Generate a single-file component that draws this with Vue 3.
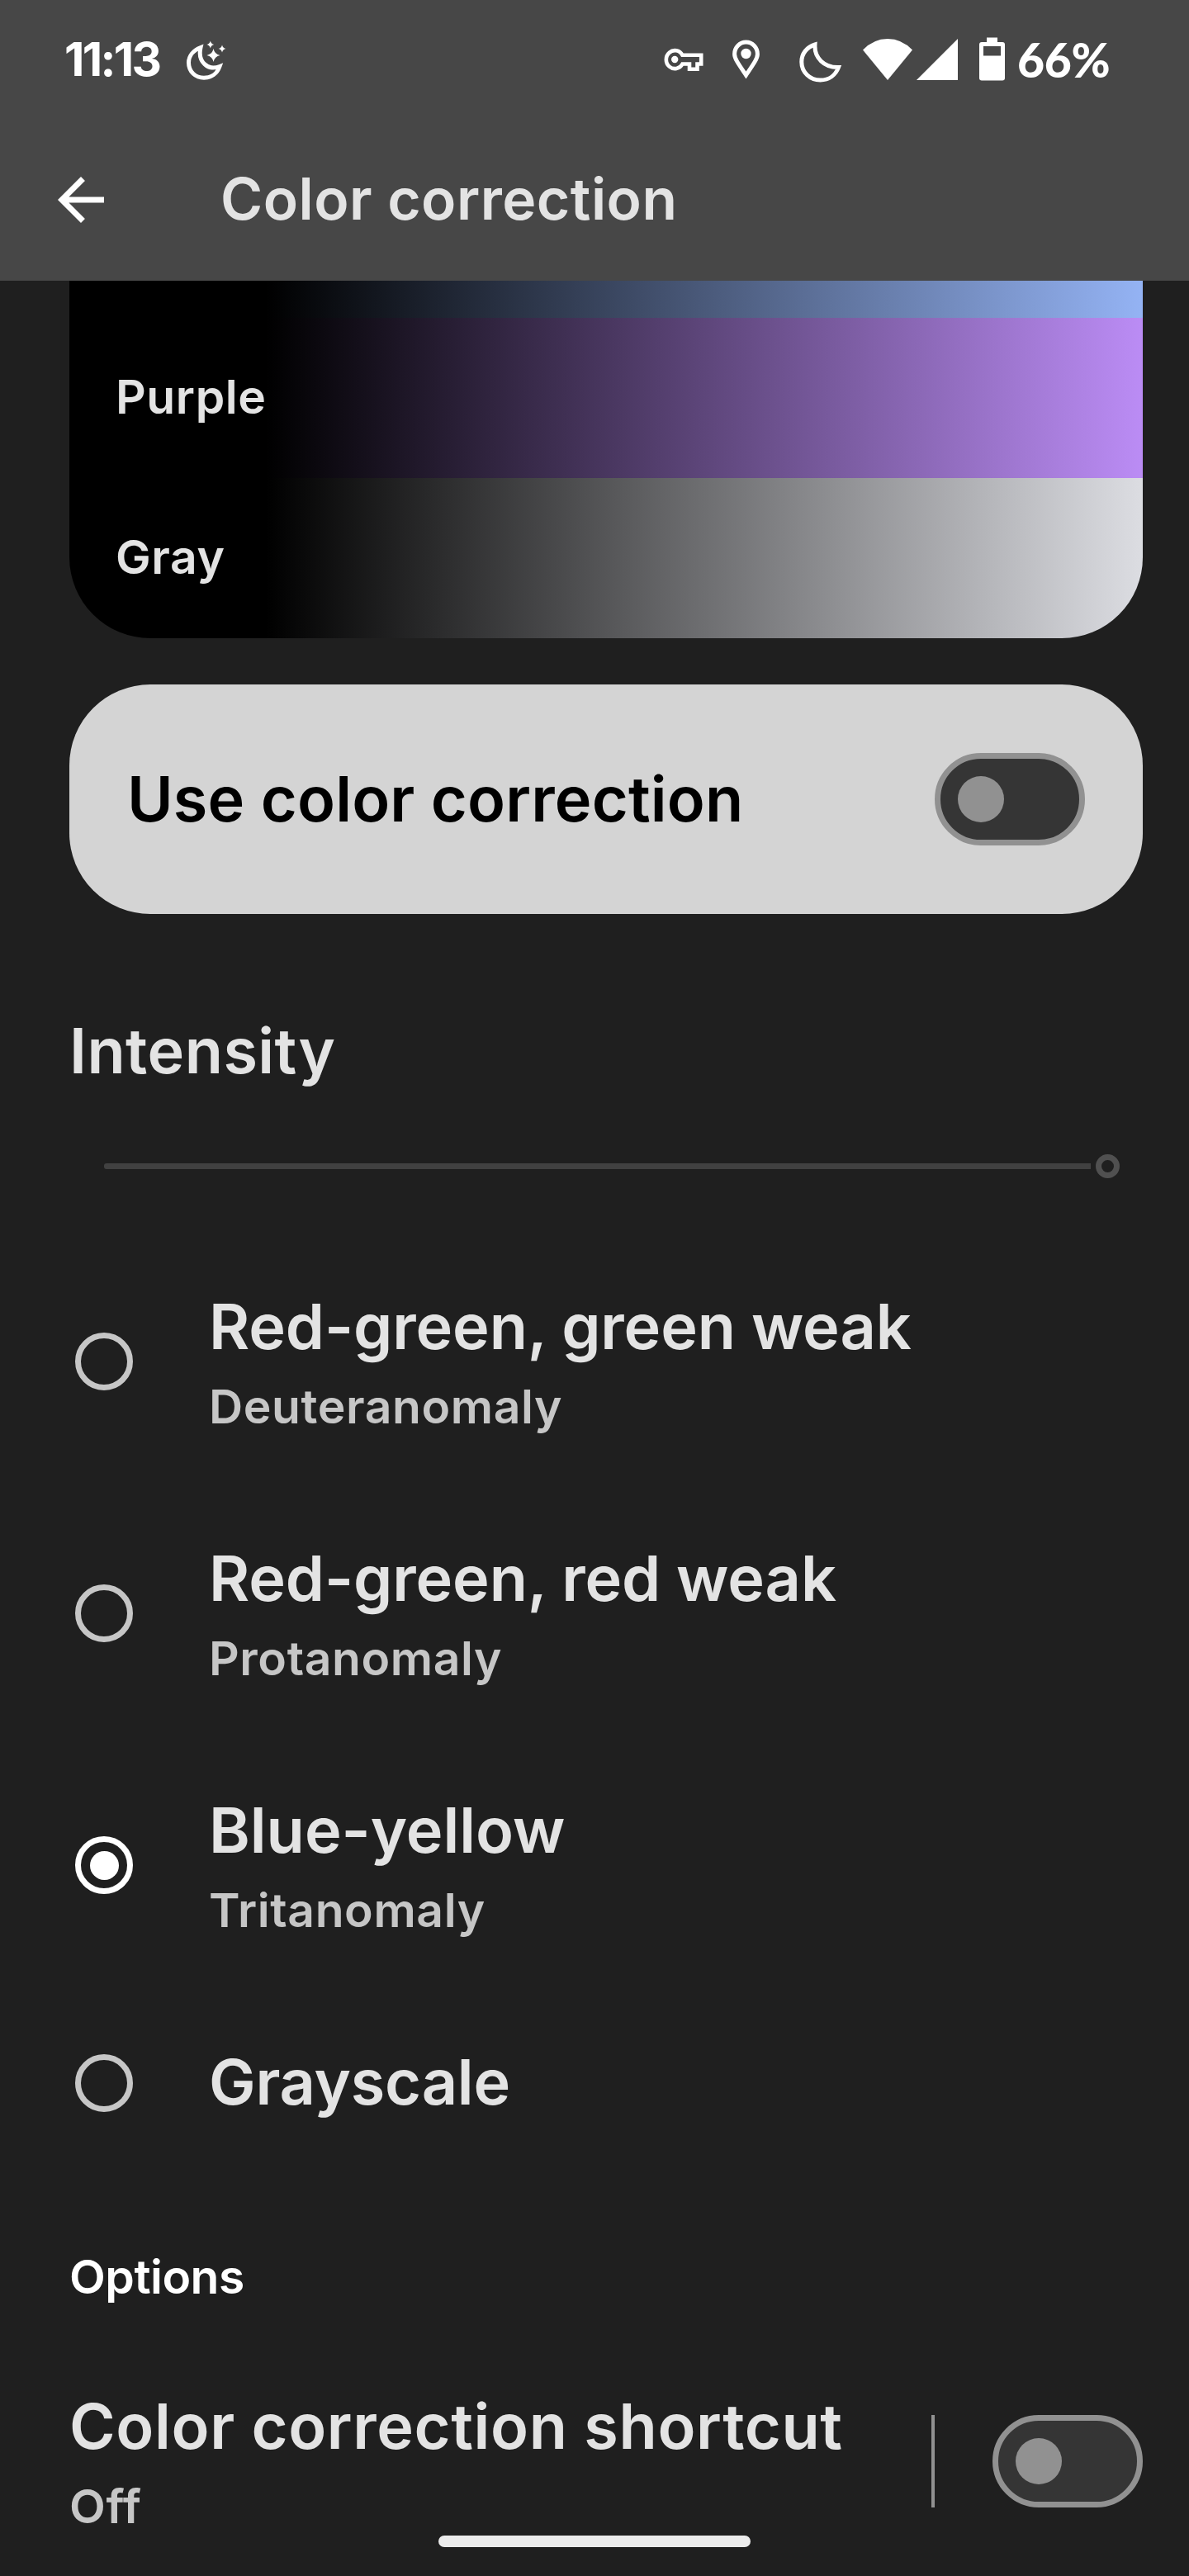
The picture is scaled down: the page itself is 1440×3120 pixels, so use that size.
<script setup>
import { ref } from 'vue'

const selected = ref('tritanomaly')

const modes = [
  { id: 'deuteranomaly', title: 'Red-green, green weak', sub: 'Deuteranomaly' },
  { id: 'protanomaly', title: 'Red-green, red weak', sub: 'Protanomaly' },
  { id: 'tritanomaly', title: 'Blue-yellow', sub: 'Tritanomaly' },
  { id: 'grayscale', title: 'Grayscale', sub: '' },
]
</script>

<template>
  <div class="screen">
    <header class="top">
      <div class="status">
        <span class="time">11:13</span>
        <svg class="i-bed" viewBox="222 44 56 56" width="56" height="56">
          <path d="M243 57.5C234 61 228.5 68 228.5 76C228.5 87 237 94.3 247 94.3C256 94.3 263 89 266 80.5C252 86 239 75 243 57.5Z" fill="none" stroke="#fff" stroke-width="5" />
          <path d="M258.5 59Q259.900 65.600 266.500 67Q259.900 68.400 258.500 75Q257.100 68.400 250.500 67Q257.100 65.600 258.500 59ZM254.800 49.500Q255.700 53.100 259.300 54Q255.700 54.900 254.800 58.500Q253.900 54.900 250.300 54Q253.900 53.100 254.800 49.500ZM269 54.500Q269.900 58.100 273.500 59Q269.900 59.900 269 63.500Q268.100 59.900 264.500 59Q268.100 58.100 269 54.500Z" fill="#fff" />
        </svg>
        <svg class="i-sys" viewBox="800 40 424 64" width="424" height="64">
          <g fill="none" stroke="#fff">
            <path d="M826.500 66.800H849.200V77.500H844.500V83.800H835V77.500H826.500A10.500 11 0 1 1 826.500 66.800Z" stroke-width="4.600" />
            <path d="M903.500 91C894 77 889.600 71 889.600 65.500A13.900 14.500 0 0 1 917.400 65.500C917.400 71 913 77 903.500 91Z" stroke-width="5" />
            <path d="M987 54C977 57 970.800 65 970.800 75C970.800 87.500 981 97 993.500 97C1004 97 1012 91 1015.500 81.500C998 82 986 70 987 54Z" stroke-width="5" />
          </g>
          <g fill="#fff">
            <circle cx="817.200" cy="72" r="4.200" />
            <circle cx="903.500" cy="65" r="6.200" />
            <path d="M1075 97L1045 60.500Q1058 47 1075 47T1105 60.500Z" />
            <path d="M1110 97H1160V47Z" />
            <path fill-rule="evenodd" d="M1195 45.500H1208V51H1214Q1217 51 1217 54V94.500Q1217 97.500 1214 97.500H1189Q1186 97.500 1186 94.500V54Q1186 51 1189 51H1195ZM1191 56V67.500H1212V56Z" />
          </g>
        </svg>
        <span class="pct">66%</span>
      </div>
      <div class="bar">
        <svg class="back" viewBox="0 0 24 24" width="84" height="84">
          <path fill="#fff" d="M20 11H7.830l5.590-5.590L12 4l-8 8 8 8 1.410-1.410L7.830 13H20v-2z" />
        </svg>
        <h1 class="heading">Color correction</h1>
      </div>
    </header>

    <main class="body">
      <section class="preview">
        <div class="swatch blue"></div>
        <div class="swatch purple"><span>Purple</span></div>
        <div class="swatch gray"><span>Gray</span></div>
      </section>

      <section class="card">
        <span class="card-label">Use color correction</span>
        <span class="switch"><i></i></span>
      </section>

      <h2 class="title intensity">Intensity</h2>
      <div class="slider"><span class="track"></span><span class="thumb"></span></div>

      <ul class="modes">
        <li v-for="m in modes" :key="m.id" class="mode" :class="[m.id, { single: !m.sub }]" @click="selected = m.id">
          <span class="radio" :class="{ on: selected === m.id }"></span>
          <div class="mode-text">
            <div class="title">{{ m.title }}</div>
            <div v-if="m.sub" class="sub">{{ m.sub }}</div>
          </div>
        </li>
      </ul>

      <h3 class="options">Options</h3>
      <section class="shortcut">
        <div class="shortcut-text">
          <div class="title">Color correction shortcut</div>
          <div class="sub">Off</div>
        </div>
        <span class="divider"></span>
        <span class="switch"><i></i></span>
      </section>
    </main>
    <div class="pill"></div>
  </div>
</template>

<style>
body {
  background: #1f1f1f;
}
</style>

<style scoped>
.screen {
  position: relative;
  width: 1440px;
  height: 3120px;
  overflow: hidden;
  background: #1f1f1f;
  color: #e3e3e3;
  font-family: Inter, "Open Sans", sans-serif;
  font-weight: 600;
}
h1, h2, h3, ul {
  margin: 0;
  padding: 0;
  font-weight: inherit;
}
.top {
  height: 340px;
  background: #474747;
}
.status {
  display: flex;
  align-items: center;
  height: 144px;
  padding-left: 78px;
  color: #fff;
  white-space: nowrap;
}
.time {
  width: 144px;
  font-size: 56.5px;
  line-height: 70px;
  font-weight: 700;
  letter-spacing: -2.6px;
}
.i-sys {
  margin-left: 522px;
}
.pct {
  margin-left: 8px;
  font: 900 57px/70px Lato, sans-serif;
  letter-spacing: -0.3px;
}
.bar {
  display: flex;
  align-items: center;
  height: 196px;
  padding-left: 56px;
}
.heading {
  margin-left: 127px;
  padding-bottom: 3px;
  font-size: 69.5px;
  line-height: 90px;
  letter-spacing: 0.5px;
}
.body {
  padding: 0 56px 0 84px;
}
.preview {
  height: 433px;
  border-radius: 0 0 98px 98px;
  overflow: hidden;
}
.swatch {
  display: flex;
  align-items: center;
  box-sizing: border-box;
  height: 194px;
  padding: 0 0 3px 56px;
  font-size: 57px;
  letter-spacing: 0.6px;
}
.blue {
  height: 45px;
  background: linear-gradient(90deg, #000 238px, #94b3f4);
}
.purple {
  background: linear-gradient(90deg, #000 238px, #bb8cf5);
}
.gray {
  background: linear-gradient(90deg, #000 238px, #dcdde2);
}
.card {
  display: flex;
  align-items: center;
  justify-content: space-between;
  height: 278px;
  margin-top: 56px;
  padding: 0 70px;
  border-radius: 98px;
  background: #d4d4d4;
  color: #000;
}
.card-label {
  padding-bottom: 2px;
  font-size: 75.6px;
  letter-spacing: 0.2px;
}
.switch {
  display: flex;
  align-items: center;
  box-sizing: border-box;
  flex: none;
  width: 182px;
  height: 112px;
  padding-left: 21px;
  border: 7px solid #919191;
  border-radius: 56px;
  background: #353535;
}
.switch i {
  width: 56px;
  height: 56px;
  border-radius: 50%;
  background: #919191;
}
.title {
  font-size: 75.6px;
  line-height: 100px;
  white-space: nowrap;
}
.sub {
  color: #c6c6c6;
  font-size: 57px;
  line-height: 94px;
  letter-spacing: 0.6px;
}
.intensity {
  margin-top: 121px;
  line-height: 89px;
  letter-spacing: 0.46px;
}
.slider {
  display: flex;
  align-items: center;
  height: 29px;
  margin: 81px 28px 0 42px;
}
.track {
  flex: 1;
  height: 7px;
  border-radius: 3px 0 0 3px;
  background: #414141;
}
.thumb {
  box-sizing: border-box;
  width: 29px;
  height: 29px;
  margin-left: 6px;
  border: 7px solid #505050;
  border-radius: 50%;
}
.modes {
  margin-top: 69px;
  list-style: none;
}
.mode {
  display: flex;
  height: 305px;
}
.radio {
  display: flex;
  align-items: center;
  justify-content: center;
  box-sizing: border-box;
  width: 70px;
  height: 70px;
  margin: 118px 92px 0 7px;
  border: 7px solid #c6c6c6;
  border-radius: 50%;
}
.radio.on {
  border-color: #fff;
}
.radio.on::after {
  content: "";
  width: 35px;
  height: 35px;
  border-radius: 50%;
  background: #fff;
}
.mode-text {
  margin-top: 61px;
}
.deuteranomaly .title,
.protanomaly .title {
  letter-spacing: -0.1px;
}
.grayscale .title {
  letter-spacing: -0.2px;
}
.single {
  height: 224px;
}
.single .radio {
  margin-top: 77px;
}
.options {
  margin-top: 88px;
  color: #fff;
  font-size: 57px;
  line-height: 70px;
  letter-spacing: -0.5px;
}
.shortcut {
  display: flex;
  align-items: flex-start;
  margin-top: 95px;
}
.shortcut-text {
  flex: 1;
  padding-top: 1px;
}
.shortcut .title {
  letter-spacing: 0.65px;
}
.divider {
  width: 4px;
  height: 112px;
  margin: 37px 70px 0 0;
  background: #919191;
}
.shortcut .switch {
  margin-top: 37px;
}
.pill {
  position: absolute;
  left: 531px;
  bottom: 35px;
  width: 378px;
  height: 14px;
  border-radius: 7px;
  background: #ececec;
}
</style>
